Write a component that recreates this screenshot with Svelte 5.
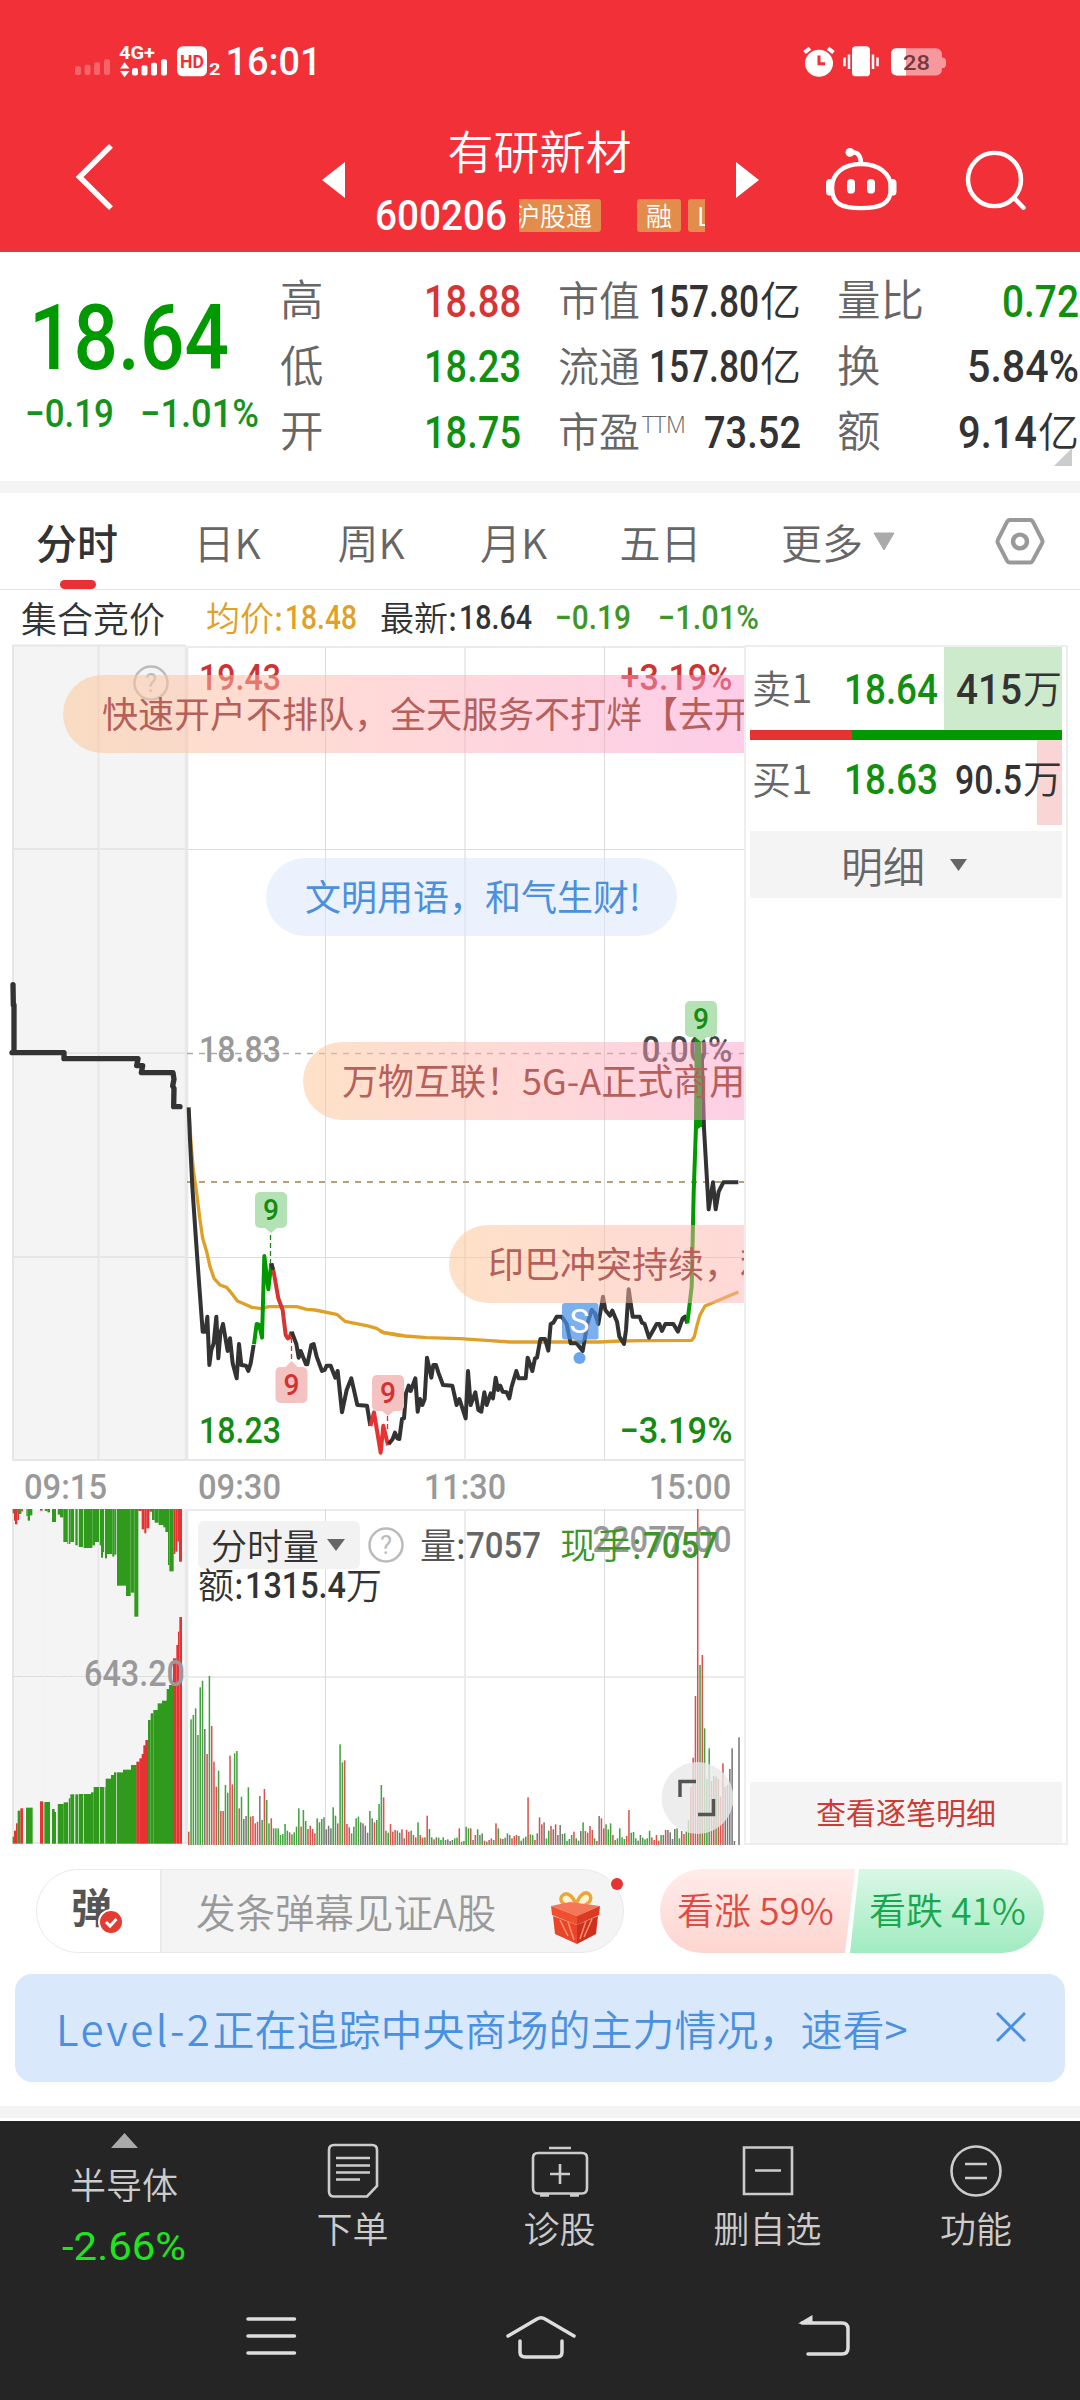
<script>
	const quote = [
		[
			{ label: '高', value: '18.88', w: 97, tone: 'up' },
			{ label: '低', value: '18.23', w: 97, tone: 'down' },
			{ label: '开', value: '18.75', w: 97, tone: 'down' }
		],
		[
			{ label: '市值', value: '157.80', w: 110, unit: '亿' },
			{ label: '流通', value: '157.80', w: 110, unit: '亿' },
			{ label: '市盈', sup: 'TTM', value: '73.52', w: 97 }
		],
		[
			{ label: '量比', value: '0.72', w: 77, tone: 'down' },
			{ label: '换', value: '5.84%', w: 112 },
			{ label: '额', value: '9.14', w: 79, unit: '亿' }
		]
	];

	const tabs = ['分时', '日K', '周K', '月K', '五日'];
	let active = $state(0);
	let showBanner = $state(true);

	const danmaku = [
		{ text: '快速开户不排队，全天服务不打烊【去开户】', x: 63, y: 31, w: 836 },
		{ text: '文明用语，和气生财!', x: 266, y: 214, w: 411, blue: true },
		{ text: '万物互联！5G-A正式商用啦', x: 303, y: 397.5, w: 600 },
		{ text: '印巴冲突持续，利好军工板块', x: 449, y: 581, w: 800 }
	];

	// price lines, in thirds of a pixel
	const morning = [
		['#333', '566,262 570,360 577,500 588,660 598,800 608,935 616,935 622,890 628,1035 634,990 641,970 649,890 655,1015 661,940 669,912 683,993 690,955 698,1030 710,1075 717,972 724,1035 738,1037 745,1053 752,1030 761,975'],
		['#009a00', '762,973 770,912 778,915 786,953 793,708 805,808 814,730'],
		['#333', '814,730 820,750'],
		['#d63535', '820,750 835,835 848,870 857,945 863,955 868,953 875,935'],
		['#333', '875,935 889,972 896,1013 902,993 918,1033 922,1033 934,975 941,972 950,1010 966,1053 974,1050 980,1037 992,1037 1006,1073 1013,1053 1026,1177 1040,1110 1054,1075 1072,1155 1101,1157 1111,1218'],
		['#e63232', '1111,1218 1122,1177 1142,1298 1150,1217 1164,1276']
	];
	const afternoon = [
		['#333', '26,1272 38,1257 45,1238 52,1255 58,1257 66,1197 72,1195 78,1120 86,1097 92,1113 106,1075 113,1175 120,1137 127,1155 134,1137 141,1013 154,1073 160,1035 168,1035 176,1060 189,1095 217,1097 230,1155 238,1137 257,1195 264,1053 272,1155 286,1117 295,1170 304,1175 313,1117 320,1155 332,1120 339,1135 347,1073 354,1110 361,1097 368,1115 380,1117 388,1135 395,1100 409,1053 416,1075 437,1075 443,1013 457,1053 465,1015 471,1013 481,957 495,957 505,992 512,912 520,908 530,890 545,890 560,912 572,970 590,970 608,993 622,912 635,870 645,880 655,912 669,830 676,870 690,887 697,872 711,905 718,950 732,972 738,930 746,808 758,890 779,890 786,908 794,912 807,953 820,930 830,912 838,912 846,933 856,912 880,912 894,935 908,895 915,890 922,910'],
		['#333', '965,100 969,220 972,325 986,568 999,487 1007,568 1016,515 1030,487 1075,487'],
		['#009a00', '922,910 935,800 941,520 948,320 950,60 954,320 958,60 960,322']
	];
	const auction = '39,1034 40,1095 42,1095 42,1238 36,1238 192,1238 192,1256 414,1256 410,1277 428,1277 424,1298 519,1298 522,1318 518,1338 522,1345 521,1400 540,1400';

	// one entry per minute: top of the bar and its colour
	const volume =
		'1025r 688g 675g 655g 735g 592g 572g 717k 792r 558g 708r 815r 890r 842g 963r 963r 885g 908g 797r 883r 790g 783g 955r 920g 987k 978k 892g 980r 978r 1000r 995r 918k 990g 897r 930g 1000g 985r 1015g 1015g 1015g 1035g 1032g 1002g 1022g 1027r 1033g 1027g 1010g 955g 1010r 960g 993g 1017r 1007r 1017r 1030r 985g 997g 987g 982k 1018k 1007k 1015k 952g 977g 1000r 763g 817g 811r 1002r 1012r 1030g 1010g 985g 980g 997k 1000k 1007k 1028k 963g 985k 997r 990g 942g 885g 922r 1022g 1028g 1002r 1025r 1020r 1022g ' +
		'1028k 1018r 1045k 1020r 1025r 1022g 1035r 1042r 997g 1035r 1043r 1042g 977r 1017g 1042g 1048r 1042k 1043g 1050g 1042g 1050k 1048k 1053k 1050k 1045g 1043g 1015r 1055g 1053g 1010g 1015g 1015r 1050k 1035r 1018g 1035g 1030k 1052r 1055g 1050r 1045r 1050g 1000r 1015g 1045r 1047k 1043g 1030k 1035g 1045r 1038r 1035r 1038g 1052k 1045k 1040g 922r 1033g 1035g 1050r 1030k 982r 1003r 997k 1045g 1022g 1008r 1018k 1003r 1035k 1005k 1032k 1030g 1053g 1047g 1035g 1025r 1045g 1052k 1023k 997g 1023r 1028r 1008r 1020r 1045g 1053r 978k 985r 1015r 1003g 1018g 1000g 1035r 1050g 1045g 1015g 1042g 1047g 1038r 960r 1028g 1026g 1045g 1052k 1035k 1043g 1048g 1045g 1022g 1042r 1050r 1035r 1052r 1035g 1035k 1020r 1020k 1027k 1047k 1017k 1015g 1045g 1023r 1032r 1023g 990g 890r 803r 618r 57r 525g 495r 715g 867g 775g 873r 857r 860g 867r 920r 820r 890k 885k 837k 775k 1053k 1065k 742k';
	const bars = volume.split(' ').map((s, i) => ({ x: 564 + i * 6.878, top: parseInt(s), c: s.slice(-1) }));

	// auction blocks: x, width, edge, colour
	const hanging = [
		[38, 14, 70, 'g'], [42, 4, 92, 'r'], [45, 7, 103, 'r'], [52, 5, 90, 'r'], [55, 9, 72, 'g'], [64, 5, 64, 'r'], [79, 4, 78, 'g'], [83, 7, 92, 'g'], [90, 7, 76, 'g'], [120, 8, 62, 'r'], [134, 8, 63, 'g'], [142, 8, 67, 'g'],
		[156, 12, 96, 'g'], [172, 8, 74, 'g'], [180, 10, 82, 'g'], [190, 12, 156, 'g'], [202, 9, 162, 'g'], [211, 12, 156, 'g'], [225, 8, 166, 'g'], [235, 14, 171, 'g'],
		[249, 28, 174, 'g'], [277, 8, 166, 'g'], [283, 14, 156, 'g'], [297, 8, 166, 'g'], [303, 6, 203, 'g'], [309, 4, 186, 'g'], [315, 6, 205, 'g'], [321, 16, 192, 'g'], [337, 6, 200, 'g'], [343, 8, 194, 'g'],
		[351, 27, 287, 'g'], [378, 14, 318, 'g'], [392, 11, 308, 'g'], [403, 12, 380, 'g'], [415, 10, 63, 'r'], [425, 8, 118, 'r'], [433, 6, 130, 'r'], [439, 9, 115, 'r'], [448, 8, 65, 'r'], [456, 8, 90, 'g'], [464, 12, 98, 'g'], [476, 16, 105, 'g'],
		[490, 8, 112, 'g'], [496, 9, 126, 'g'], [504, 4, 225, 'g'], [508, 13, 244, 'g'], [521, 5, 192, 'r'], [526, 6, 185, 'r'], [532, 5, 155, 'r'], [537, 9, 215, 'r']
	];
	const standing = [
		[38, 4, 1040, 'g'], [42, 6, 1022, 'r'], [48, 5, 1000, 'r'], [53, 8, 962, 'g'], [61, 8, 955, 'r'], [78, 20, 953, 'g'], [120, 10, 934, 'r'], [132, 18, 936, 'g'], [156, 8, 957, 'g'], [162, 6, 966, 'g'],
		[172, 19, 942, 'g'], [191, 14, 937, 'g'], [205, 6, 925, 'g'], [211, 26, 913, 'g'], [237, 36, 912, 'g'], [273, 8, 907, 'g'], [281, 36, 891, 'g'], [317, 18, 866, 'g'], [333, 10, 855, 'g'], [342, 27, 847, 'g'], [369, 24, 839, 'g'], [393, 17, 825, 'g'],
		[409, 10, 815, 'r'], [418, 8, 805, 'r'], [425, 8, 792, 'r'], [430, 8, 766, 'r'], [436, 8, 750, 'r'], [444, 8, 690, 'g'], [452, 8, 670, 'g'], [460, 14, 660, 'g'], [473, 13, 640, 'g'], [486, 15, 632, 'g'],
		[500, 8, 597, 'g'], [507, 13, 585, 'g'], [519, 10, 505, 'r'], [529, 5, 465, 'r'], [534, 4, 425, 'r'], [538, 8, 381, 'r']
	];
	const stripes = [69, 131, 150, 171, 205, 223, 234, 249, 298, 313, 224, 349];
	const palette = { r: '#e63232', g: '#2f9a1c' };
	const thin = { r: '#d8524f', g: '#43a33f', k: '#777' };
</script>

{#snippet fit(text, w, h, cls = '')}
	<svg class="fit {cls}" width={w} height={h}>
		<text x="0" y={h} font-size={h / 0.711} textLength={w} lengthAdjust="spacingAndGlyphs">{text}</text>
	</svg>
{/snippet}

{#snippet num(text, x, y, w, h, fill, weight = 500)}
	<text {x} {y} {fill} font-weight={weight} font-size={h / 0.711} textLength={w} lengthAdjust="spacingAndGlyphs">{text}</text>
{/snippet}

{#snippet nine(x, y, up, color, bg)}
	<g transform="translate({x} {y})">
		<rect width="32" height="36" rx="5" fill={bg} />
		<path d={up ? 'M10 0 L16 -6 L22 0Z' : 'M10 36 L16 41 L22 36Z'} fill={bg} />
		{@render num('9', 8, 28, 16, 21, color)}
	</g>
{/snippet}

<div class="phone">
	<header>
		<div class="status">
			<svg width="250" height="48.5" viewBox="72 40 250 50" preserveAspectRatio="none">
				<g fill="#fff" opacity=".25">
					<rect x="75" y="68" width="6" height="9" rx="2" /><rect x="84.500" y="66.500" width="6" height="10.500" rx="2" />
					<rect x="94" y="64" width="6" height="13" rx="2" /><rect x="104" y="61" width="6" height="16" rx="2" />
				</g>
				<g fill="#fff">
					{@render num('4G+', 119, 60.5, 36, 14, '#fff', 700)}
					<path d="M120 70.500 L124.500 64 L129.500 70.500Z M120 73 L124.500 79.500 L129.500 73Z" />
					<rect x="132" y="70" width="6" height="7.500" rx="2" /><rect x="141.500" y="67" width="6" height="10.500" rx="2" />
					<rect x="151" y="64.500" width="6" height="13" rx="2" /><rect x="161" y="61" width="6" height="16.500" rx="2" />
					<rect x="177" y="47.500" width="30" height="31" rx="6" />
					{@render num('HD', 180, 70, 24, 14, '#f13038', 700)}
					{@render num('2', 209, 77.5, 11.5, 12, '#fff', 700)}
					{@render num('16:01', 225.5, 77.5, 96, 28.5, '#fff')}
				</g>
			</svg>
			<svg width="146" height="48.5" viewBox="800 40 146 50" preserveAspectRatio="none">
				<g fill="#fff">
					<circle cx="819" cy="65" r="14" />
					<path d="M804.500 54 L810 49.500 M833.500 54 L828 49.500" stroke="#fff" stroke-width="4" />
					<path d="M819 57 V65.500 H825" fill="none" stroke="#f13038" stroke-width="3" />
					<rect x="852" y="47.500" width="18" height="31" rx="4" />
					<path d="M849 56 V71 M844.500 59 V68 M873 56 V71 M877.500 59 V68" stroke="#fff" stroke-width="2.500" />
				</g>
				<rect x="891" y="49.500" width="51" height="28" rx="6" fill="#fff" opacity=".5" />
				<path d="M942 59 q4 0 4 4 v3 q0 4 -4 4z" fill="#fff" opacity=".5" />
				<path d="M906 49.500 H897 q-6 0 -6 6 V71.500 q0 6 6 6 H906Z" fill="#fff" />
				{@render num('28', 903, 72, 27, 15.5, '#703a40')}
			</svg>
		</div>
		<div class="title-row">
			<svg class="back" width="44" height="72" viewBox="72 146 44 74" preserveAspectRatio="none"><path d="M111 151 L79.500 183 L111 215" fill="none" stroke="#fff" stroke-width="5.500" /></svg>
			<svg width="24" height="36"><path d="M0 18 L23 0 V36Z" fill="#fff" /></svg>
			<div class="stock">
				<h1>有研新材</h1>
				<div class="code">
					{@render fit('600206', 132, 30)}
					<div class="tags"><span>沪股通</span><span>融</span><span>L1</span></div>
				</div>
			</div>
			<svg width="24" height="36"><path d="M0 0 V36 L23 18Z" fill="#fff" /></svg>
			<svg class="robot" width="74" height="68" viewBox="824 150 74 70" preserveAspectRatio="none">
				<g fill="none" stroke="#fff" stroke-width="4.500">
					<path d="M861 168.500 C878 168.500 891 178 891 193 C891 210 880 214 861 214 C842 214 832 210 832 193 C832 178 844 168.500 861 168.500Z" />
					<path d="M851 157 C858 155 861 161 861 168" />
				</g>
				<g fill="#fff">
					<circle cx="850" cy="156.500" r="4.500" />
					<rect x="826" y="184" width="8" height="17" rx="4" /><rect x="888.500" y="184" width="8" height="17" rx="4" />
					<rect x="847" y="184" width="8" height="15" rx="4" /><rect x="867" y="184" width="8" height="15" rx="4" />
				</g>
			</svg>
			<svg width="64" height="64" viewBox="964 152 64 66" preserveAspectRatio="none">
				<ellipse cx="994.500" cy="184.500" rx="26.500" ry="27.500" fill="none" stroke="#fff" stroke-width="4.500" />
				<path d="M1014 203.500 L1023.500 213.500" stroke="#fff" stroke-width="4.500" stroke-linecap="round" />
			</svg>
		</div>
	</header>

	<section class="quote">
		<div class="last">
			{@render fit('18.64', 200, 64.5)}
			<div class="change">
				{@render fit('−0.19', 89, 28)}
				{@render fit('−1.01%', 119, 28)}
			</div>
		</div>
		{#each quote as col}
			<dl>
				{#each col as item}
					<div>
						<dt>{item.label}{#if item.sup}<sup>{item.sup}</sup>{/if}</dt>
						<dd class={item.tone}>
							{@render fit(item.value, item.w, 32)}
							{#if item.unit}<span>{item.unit}</span>{/if}
						</dd>
					</div>
				{/each}
			</dl>
		{/each}
		<i class="corner"></i>
	</section>

	<nav class="tabs">
		{#each tabs as tab, i}
			<button class:active={i === active} onclick={() => (active = i)}>{tab}</button>
		{/each}
		<button class="more">更多<svg width="22" height="19"><path d="M1 1 H21 L11 18Z" fill="#aaa" stroke="#aaa" stroke-linejoin="round" /></svg></button>
		<svg class="gear" width="50" height="49" viewBox="0 0 50 50" preserveAspectRatio="none" fill="none" stroke="#999">
			<path d="M15 3 H35 Q37 3 38 5 L47 23 Q48 25 47 27 L38 44 Q37 46.500 35 46.500 H15 Q13 46.500 12 44.500 L3 27 Q2 25 3 23 L12 5 Q13 3 15 3Z" stroke-width="4" />
			<circle cx="25" cy="25" r="7" stroke-width="4.500" />
		</svg>
	</nav>

	<div class="info">
		<span class="auction">集合竞价</span>
		<span class="avg">均价:{@render fit('18.48', 72, 23.5)}</span>
		<span class="latest">最新:{@render fit('18.64', 73, 23.5)}</span>
		<span class="delta">{@render fit('−0.19', 76, 23.5)}</span>
		<span class="delta">{@render fit('−1.01%', 101, 23.5)}</span>
	</div>

	<main>
		<div class="chart">
			<svg width="745" height="1204" viewBox="0 644 745 1204">
				<rect x="13" y="645.500" width="173" height="814.500" fill="#f4f4f4" />
				<rect x="13" y="1509" width="173" height="334.500" fill="#f4f4f4" />
				<path d="M12 645.500 H186 M13 645 V1460 M98.500 645 V1460 M12 849 H186 M12 1053 H186 M12 1257 H186 M12 1460 H745 M13 1509 V1844 M98.500 1509 V1844 M12 1843 H186" stroke="#e6e6e6" stroke-width="2" />
				<path d="M186.500 646 V1460 M186.500 1509 V1844" stroke="#e8e8e8" stroke-width="3.500" />
				<path d="M186 647 H745 M186 1510 H745 M186 1677 H745 M465 647 V1460 M465 1509 V1844" stroke="#ebebeb" stroke-width="2" />
				<path d="M325.500 647 V1460 M604.500 647 V1460 M325.500 1509 V1844 M604.500 1509 V1844 M187 849.500 H745 M187 1257.500 H745 M12 1676.500 H186" stroke="#dcdcdc" />
				<path d="M187 1053.500 H745" stroke="#aaa" stroke-width="1.500" stroke-dasharray="6 6" />
				<path d="M187 1182 H745" stroke="#b8a078" stroke-width="1.800" stroke-dasharray="6 6" />

				<circle cx="151" cy="683" r="16.500" fill="none" stroke="#bbb" stroke-width="2.500" />
				{@render num('?', 145, 692, 12, 18, '#bbb', 400)}
				{@render num('19.43', 199, 690, 82, 26, '#cc3333')}
				{@render num('+3.19%', 620.5, 690, 112, 26, '#cc3333')}
				{@render num('18.83', 199, 1062, 82, 26, '#999')}
				{@render num('0.00%', 641.5, 1062, 91, 26, '#444')}
				{@render num('18.23', 199, 1443, 82, 26, '#148c14')}
				{@render num('−3.19%', 619.5, 1443, 113, 26, '#148c14')}
				{@render num('09:15', 24, 1499, 83, 25.5, '#999')}
				{@render num('09:30', 198, 1499, 83, 25.5, '#999')}
				{@render num('11:30', 424, 1499, 82, 25.5, '#999')}
				{@render num('15:00', 649, 1499, 82, 25.5, '#999')}

				<!-- average and price -->
				<g fill="none" stroke="#e0a028" stroke-width="10" stroke-linejoin="round">
					<polyline transform="translate(0 1020) scale(.33333)" points="567,270 573,370 580,450 590,520 600,600 608,655 620,695 630,740 642,775 660,795 680,802 695,820 712,843 735,853 755,862 785,866 805,860 890,860 920,868 945,870 1010,883 1035,904 1065,910 1100,917 1130,925 1150,938 1200,947" />
					<polyline transform="translate(380 1020) scale(.33333)" points="0,932 12,938 40,942 75,948 140,953 240,956 330,962 390,966 660,966 720,963 790,962 935,961 943,950 950,920 960,885 975,858 1075,816" />
				</g>
				<g fill="none" stroke-width="12" stroke-linejoin="round">
					<polyline transform="translate(0 640) scale(.33333)" points={auction} stroke="#333" stroke-width="16" stroke-linecap="round" />
					<g transform="translate(0 1020) scale(.33333)">
						{#each morning as [color, points]}<polyline {points} stroke={color} />{/each}
					</g>
					<g transform="translate(380 1020) scale(.33333)">
						{#each afternoon as [color, points]}<polyline {points} stroke={color} />{/each}
					</g>
				</g>

				<g stroke-width="1.300" stroke-dasharray="5 3">
					<path d="M270.500 1235 V1264" stroke="#148c14" />
					<path d="M291.500 1338 V1362 M387.500 1416 V1432" stroke="#c33" />
				</g>
				{@render nine(255, 1192, false, '#148c14', '#b4e2b5')}
				{@render nine(275.5, 1367, true, '#d23232', '#f5c2c2')}
				{@render nine(372, 1375, false, '#d23232', '#f5c2c2')}
				{@render nine(685, 1001, false, '#148c14', '#b4e2b5')}
				<path d="M565 1303 H596 Q598.500 1303 598.500 1306 V1337 Q598.500 1339.500 596 1339.500 H586 L580 1345 L574 1339.500 H565 Q562 1339.500 562 1337 V1306 Q562 1303 565 1303Z" fill="#4a90e8" opacity=".72" />
				{@render num('S', 569.5, 1333, 20, 23, '#fff', 400)}
				<circle cx="579.500" cy="1358" r="6" fill="#6ba5ec" />

				<!-- volume -->
				<g transform="translate(0 1490) scale(.33333)">
					{#each hanging as [x, w, y, c]}<rect {x} y="57" width={w} height={y - 57} fill={palette[c]} />{/each}
					{#each standing as [x, w, y, c]}<rect {x} {y} width={w} height={1061 - y} fill={palette[c]} />{/each}
					{#each stripes as x}<rect {x} y="57" width="2" height="1004" fill="#f4f4f4" />{/each}
					{#each bars as b}<rect x={b.x} y={b.top} width="4.600" height={1065 - b.top} fill={thin[b.c]} />{/each}
				</g>
				{@render num('643.20', 84, 1685.5, 101, 26, '#999')}
				<g class="cjk">
					<rect x="198" y="1521" width="162" height="48" rx="6" fill="#f2f2f2" />
					<text x="211" y="1559.500" fill="#333">分时量</text>
					<path d="M327 1539 H345 L336 1551Z" fill="#666" />
					<circle cx="386" cy="1545" r="16.500" fill="none" stroke="#bbb" stroke-width="2.500" />
					{@render num('?', 380, 1554, 12, 18, '#bbb', 400)}
					{@render num('22077.00', 592.5, 1552, 139, 26, '#999')}
					<text x="420" y="1558.500" fill="#555">量:</text>
					{@render num('7057', 466, 1558, 75, 26, '#666')}
					<text x="560" y="1558.500" fill="#3d9628">现手:</text>
					{@render num('7057', 643, 1558, 75, 26, '#3d9628')}
					<text x="198" y="1598.500" fill="#333">额:</text>
					{@render num('1315.4', 245, 1598, 101, 26, '#333')}
					<text x="346" y="1598.500" fill="#333">万</text>
				</g>
				<circle cx="697.500" cy="1798" r="36" fill="#e8e8e8" opacity=".8" />
				<path d="M680 1797 V1781.500 H696 M698 1814.500 H713.500 V1799" fill="none" stroke="#555" stroke-width="3.500" />
			</svg>
			{#each danmaku as d}
				<p class="danmaku" class:blue={d.blue} style="left: {d.x}px; top: {d.y}px; width: {d.w}px">{d.text}</p>
			{/each}
		</div>

		<aside>
			<div class="level sell"><span>卖1</span>{@render fit('18.64', 94, 30, 'down')}<b>{@render fit('415', 66, 30)}<em>万</em></b></div>
			<div class="ratio"><i></i></div>
			<div class="level buy"><span>买1</span>{@render fit('18.63', 94, 30, 'down')}<b>{@render fit('90.5', 67, 29)}<em>万</em></b></div>
			<button class="detail">明细<svg width="17" height="12"><path d="M0 0 H17 L8.500 12Z" fill="#666" /></svg></button>
			<button class="ticks">查看逐笔明细</button>
		</aside>
	</main>

	<div class="actions">
		<div class="composer">
			<span class="logo">弹
				<svg width="26" height="26" viewBox="0 0 26 26"><circle cx="13" cy="13" r="12" fill="#e23c32" stroke="#fff" stroke-width="2" /><path d="M8 13 L12 17 L18.500 10" fill="none" stroke="#fff" stroke-width="3" /></svg>
			</span>
			<span class="placeholder">发条弹幕见证A股</span>
			<svg class="gift" width="52" height="54" viewBox="550 1892 52 54">
				<path d="M575 1908 C562 1908 558 1900 563 1896 C568 1892 575 1899 576 1908 C577 1899 584 1891 589 1895 C594 1900 588 1908 576 1908" fill="#fff3d0" stroke="#eba53a" stroke-width="3.500" />
				<path d="M551 1907 L570 1903 L600 1907 L577 1917Z" fill="#f4775a" />
				<path d="M551 1907 L577 1917 V1926 L552 1916Z" fill="#f0502f" />
				<path d="M600 1907 L577 1917 V1926 L599 1916Z" fill="#d93a20" />
				<path d="M553 1917 L577 1926 V1945 L555 1935Z" fill="#e8452a" />
				<path d="M598 1917 L577 1926 V1945 L596 1935Z" fill="#cf2f1c" />
				<path d="M560 1921 L568 1937 M568 1923 L574 1941 M592 1920 L584 1938 M586 1922 L580 1940" stroke="#f9936d" stroke-width="1.500" />
			</svg>
			<i class="dot"></i>
		</div>
		<div class="vote">
			<span class="rise">看涨 59%</span>
			<span class="fall">看跌 41%</span>
		</div>
	</div>

	{#if showBanner}
		<div class="banner">
			<p><span>Level-2</span>正在追踪中央商场的主力情况，速看&gt;</p>
			<button aria-label="关闭" onclick={() => (showBanner = false)}>
				<svg width="30" height="30"><path d="M1 1 L29 29 M29 1 L1 29" stroke="#4a90e0" stroke-width="3" /></svg>
			</button>
		</div>
	{/if}
	<div class="strip"></div>

	<footer>
		<div class="toolbar">
			<div class="sector">
				<svg width="27" height="15"><path d="M13.500 0 L27 15 H0Z" fill="#aaa" /></svg>
				<span>半导体</span>
				{@render fit('-2.66%', 124, 28)}
			</div>
			<div class="tool">
				<svg width="58" height="56" fill="none" stroke="#ccc" stroke-width="2.600">
					<path d="M10 2 H48 Q53 2 53 7 V43 L43 53.500 H10 Q5 53.500 5 48.500 V7 Q5 2 10 2Z M12 15 H46 M12 22.500 H46 M12 29.500 H46 M12 36.500 H36" />
				</svg>
				<span>下单</span>
			</div>
			<div class="tool">
				<svg width="58" height="56" fill="none" stroke="#ccc" stroke-width="2.600">
					<path d="M7 10 H51 Q56 10 56 15 V45 Q56 50.500 51 50.500 H7 Q2 50.500 2 45 V15 Q2 10 7 10Z M29 21 V41 M19 31 H39 M18 5 H40 M9 52.500 H18 M39 52.500 H48" />
				</svg>
				<span>诊股</span>
			</div>
			<div class="tool">
				<svg width="58" height="56" fill="none" stroke="#ccc" stroke-width="2.600"><path d="M5 4.500 H53 V51 H5Z M16 27.500 H42" /></svg>
				<span>删自选</span>
			</div>
			<div class="tool">
				<svg width="58" height="56" fill="none" stroke="#ccc" stroke-width="2.600"><circle cx="29" cy="28" r="24.500" /><path d="M18 21 H40 M18 35 H40" /></svg>
				<span>功能</span>
			</div>
		</div>
		<div class="system">
			<svg width="52" height="44" viewBox="245 2315 52 44"><path d="M248 2320 H294.500 M248 2337 H294.500 M248 2354 H294.500" stroke="#ddd" stroke-width="3.500" stroke-linecap="round" /></svg>
			<svg width="72" height="46" viewBox="505 2313 72 46" fill="none" stroke="#ddd" stroke-width="3.500" stroke-linecap="round" stroke-linejoin="round">
				<path d="M508 2335 L537 2318 Q541 2315.500 545 2318 L574 2335 M520 2340 V2351 Q520 2356 525 2356 H557 Q562 2356 562 2351 V2340" />
			</svg>
			<svg width="54" height="44" viewBox="797 2314 54 44" fill="none" stroke="#ddd" stroke-width="3.500" stroke-linecap="round">
				<path d="M802 2323 H842 Q848 2323 848 2329 V2348 Q848 2354 842 2354 H808" />
				<path d="M798 2323.500 L812.500 2315 V2324Z" fill="#ddd" stroke="none" />
			</svg>
		</div>
	</footer>
</div>

<style>
	:global(body) {
		background: #fff;
		margin: 0;
	}

	.phone {
		width: 1080px;
		height: 2400px;
		overflow: hidden;
		display: flex;
		flex-direction: column;
		font-family: 'Noto Sans CJK SC', sans-serif;
		font-weight: 350;
		color: #333;
	}

	svg {
		display: block;
		flex: none;
	}

	svg text {
		font-family: Roboto, sans-serif;
	}

	.cjk text:not([textLength]) {
		font-family: 'Noto Sans CJK SC', sans-serif;
		font-size: 36px;
		font-weight: 350;
	}

	.fit {
		overflow: visible;
		fill: currentColor;
		font-weight: 500;
	}

	button {
		border: none;
		background: none;
		padding: 0;
		font: inherit;
		color: inherit;
	}

	.up {
		color: #d63535;
	}

	.down {
		color: #0f900f;
	}

	header {
		height: 250px;
		background: #f13038;
		border-bottom: 2px solid #e03a3f;
		color: #fff;
	}

	.status {
		height: 90px;
		box-sizing: border-box;
		padding: 39px 134px 0 72px;
		display: flex;
		justify-content: space-between;
	}

	.title-row {
		height: 160px;
		display: flex;
		align-items: center;
		padding: 20px 52px 0 72px;
		box-sizing: border-box;
	}

	.back {
		margin: -6px 206px 0 0;
	}

	.stock {
		width: 328px;
		margin: 0 31px;
		display: flex;
		flex-direction: column;
	}

	h1 {
		margin: -8px 0 0;
		font-size: 46px;
		font-weight: 350;
		line-height: 60px;
		text-align: center;
		padding-right: 3px;
	}

	.code {
		display: flex;
		align-items: center;
		margin: 18px 0 0 -2px;
		height: 36px;
	}

	.tags {
		width: 186px;
		height: 33px;
		margin-left: 12px;
		display: flex;
		overflow: hidden;
	}

	.tags span {
		flex: none;
		background: #e28d4c;
		border-radius: 3px;
		font-size: 26px;
		line-height: 32px;
		padding: 0 9px;
	}

	.tags span:first-child {
		margin-left: -14px;
		margin-right: 36px;
	}

	.tags span:nth-child(2) {
		margin-right: 7px;
	}

	.robot {
		margin: 0 66px 0 64px;
	}

	.quote {
		position: relative;
		height: 229px;
		display: grid;
		grid-template-columns: 281px 240px 240px 240px;
		border-bottom: 12px solid #f4f4f4;
	}

	.last {
		padding: 52px 0 0 29px;
		color: #009a00;
	}

	.change {
		display: flex;
		gap: 26px;
		margin: 30px 0 0 -4px;
		color: #14921a;
	}

	dl {
		margin: 0 0 0 -1px;
		padding-top: 16px;
	}

	dl:nth-of-type(2) {
		margin-left: 37px;
		margin-right: -40px;
	}

	dl:nth-of-type(3) {
		margin-left: 76px;
		margin-right: -78px;
	}

	dl div {
		height: 65.5px;
		display: flex;
		justify-content: space-between;
		align-items: center;
		font-size: 43.5px;
		line-height: 58px;
	}

	dl:nth-of-type(2) div {
		font-size: 41px;
	}

	dt {
		color: #666;
		display: flex;
		padding-bottom: 5px;
	}

	dd {
		margin: 0;
		display: flex;
		align-items: center;
		gap: 1px;
	}

	dd span {
		font-size: 41px;
		padding-bottom: 6px;
	}

	sup {
		font-family: 'Open Sans', sans-serif;
		font-size: 23px;
		line-height: 48px;
		margin-left: 2px;
	}

	.corner {
		position: absolute;
		right: 8px;
		bottom: 15px;
		border-left: 18px solid transparent;
		border-bottom: 18px solid #ccc;
	}

	.tabs {
		height: 96px;
		border-bottom: 1px solid #e3e3e3;
		display: grid;
		grid-template-columns: 154px 146px 142px 143px 151px 204px 1fr;
		align-items: center;
		font-size: 41px;
		color: #666;
	}

	.tabs button {
		position: relative;
		height: 96px;
		line-height: 92px;
	}

	.tabs .active {
		color: #333;
		font-weight: 500;
	}

	.active::after {
		content: '';
		position: absolute;
		left: 60px;
		bottom: 0;
		width: 36px;
		height: 9px;
		border-radius: 5px;
		background: #e63232;
	}

	.more {
		display: flex;
		align-items: center;
		justify-content: center;
		gap: 10px;
	}

	.gear {
		margin-left: 55px;
	}

	.info {
		height: 54px;
		display: flex;
		align-items: center;
		font-size: 34px;
		line-height: 48px;
		padding-left: 21px;
	}

	.info span {
		display: flex;
		align-items: center;
		gap: 2px;
	}

	.auction {
		font-size: 36px;
		width: 185px;
	}

	.avg {
		color: #dfa126;
		width: 174px;
	}

	.latest {
		width: 175px;
	}

	.delta {
		color: #3d9628;
		width: 103px;
	}

	main {
		display: flex;
		height: 1204px;
	}

	.chart {
		position: relative;
		width: 744px;
		height: 1204px;
		overflow: hidden;
	}

	.danmaku {
		position: absolute;
		box-sizing: border-box;
		margin: 0;
		height: 78px;
		padding-left: 39px;
		border-radius: 39px;
		font-size: 36px;
		line-height: 75px;
		font-weight: 400;
		white-space: nowrap;
		overflow: hidden;
		color: #b75f5b;
		background: linear-gradient(90deg, rgba(253, 200, 155, 0.55), rgba(253, 165, 180, 0.45) 50%, rgba(250, 145, 220, 0.5));
	}

	.blue {
		background: rgba(218, 232, 251, 0.55);
		color: #4a90dd;
	}

	aside {
		box-sizing: border-box;
		width: 324px;
		height: 1200px;
		margin-top: 1px;
		border: 2px solid #eee;
		padding: 0 4px;
		display: flex;
		flex-direction: column;
	}

	.level {
		box-sizing: border-box;
		height: 83px;
		display: flex;
		align-items: center;
		font-size: 39px;
	}

	.level span {
		width: 94px;
		padding: 0 0 5px 2px;
		box-sizing: border-box;
		color: #666;
	}

	.level b {
		flex: 1;
		height: 100%;
		margin-left: 6px;
		display: flex;
		align-items: center;
		justify-content: flex-end;
		gap: 1px;
		font-weight: inherit;
		white-space: nowrap;
	}

	.level em {
		font-style: normal;
		padding-bottom: 6px;
	}

	.sell b {
		background: #cdeacd;
	}

	.ratio {
		height: 10px;
		background: #009a00;
	}

	.ratio i {
		display: block;
		width: 102px;
		height: 10px;
		background: #e63232;
	}

	.buy {
		height: 85px;
		margin-bottom: 6px;
		padding-bottom: 7px;
		background: linear-gradient(#f9d5d5, #f9d5d5) right / 25px 100% no-repeat;
	}

	.detail {
		height: 67px;
		background: #f4f4f4;
		color: #666;
		font-size: 42px;
		line-height: 62px;
		padding: 0 4px 0 0;
		box-sizing: border-box;
		display: flex;
		align-items: center;
		justify-content: center;
		gap: 25px;
	}

	.ticks {
		margin-top: auto;
		height: 61px;
		line-height: 58px;
		padding-bottom: 3px;
		background: #f4f4f4;
		color: #cc3b35;
		font-size: 30px;
		font-weight: 400;
	}

	.actions {
		display: flex;
		align-items: center;
		justify-content: space-between;
		height: 84px;
		margin: 21px 36px 0;
	}

	.composer {
		position: relative;
		box-sizing: border-box;
		width: 588px;
		height: 84px;
		border: 1.5px solid #eaeaea;
		border-radius: 42px;
		display: flex;
		align-items: center;
		background: linear-gradient(90deg, #fff 123px, #eaeaea 123px, #eaeaea 125px, #f4f4f4 125px);
	}

	.logo {
		position: relative;
		width: 125px;
		padding-left: 34px;
		box-sizing: border-box;
		font-size: 41px;
		font-weight: 700;
		color: #555;
		line-height: 72px;
		height: 84px;
	}

	.logo svg {
		position: absolute;
		left: 61px;
		top: 40px;
	}

	.placeholder {
		width: 354px;
		padding: 0 0 2px 34px;
		box-sizing: border-box;
		white-space: nowrap;
		font-size: 39.5px;
		color: #999;
	}

	.gift {
		margin: 14px 0 0 34px;
	}

	.dot {
		position: absolute;
		right: 0;
		top: 8px;
		width: 12px;
		height: 12px;
		border-radius: 50%;
		background: #e63232;
	}

	.vote {
		width: 384px;
		height: 84px;
		border-radius: 42px;
		overflow: hidden;
		display: flex;
		font-size: 37px;
		line-height: 81px;
	}

	.vote span {
		box-sizing: border-box;
		white-space: nowrap;
	}

	.rise {
		width: 195px;
		padding-left: 17px;
		color: #e04a42;
		background: linear-gradient(#ffecea, #fdd5d0);
		clip-path: polygon(0 0, 100% 0, 185px 100%, 0 100%);
	}

	.fall {
		width: 194px;
		margin-left: -5px;
		padding-left: 19px;
		color: #17a84e;
		background: linear-gradient(#daf8e6, #a0ebc0);
		clip-path: polygon(9px 0, 100% 0, 100% 100%, 0 100%);
	}

	.banner {
		box-sizing: border-box;
		height: 108px;
		margin: 21px 15px 0;
		padding: 0 39px 2px 41px;
		border-radius: 17px;
		background: #dae8fb;
		color: #4a90e0;
		display: flex;
		align-items: center;
		justify-content: space-between;
		font-size: 42px;
		white-space: nowrap;
	}

	.banner p {
		margin: 0;
	}

	.banner span {
		letter-spacing: 2.5px;
	}

	.strip {
		height: 12px;
		margin: 24px 0 3px;
		background: #f4f4f4;
	}

	footer {
		flex: 1;
		background: #252525;
		color: #ccc;
	}

	.toolbar {
		display: grid;
		grid-template-columns: 249px 207px 207px 209px 208px;
		height: 179px;
		font-size: 36px;
	}

	.sector,
	.tool {
		display: flex;
		flex-direction: column;
		align-items: center;
	}

	.sector {
		padding: 12px 0 0;
		width: 248px;
	}

	.sector span {
		line-height: 50px;
		margin: 10px 0 24px;
	}

	.sector .fit {
		color: #1ee61e;
		font-weight: 400;
	}

	.tool {
		padding-top: 22px;
	}

	.tool span {
		line-height: 50px;
		margin-top: 3px;
	}

	.system {
		display: flex;
		padding: 14px 0 0 245px;
	}

	.system svg:nth-child(2) {
		margin: 0 220px 0 208px;
	}
</style>
